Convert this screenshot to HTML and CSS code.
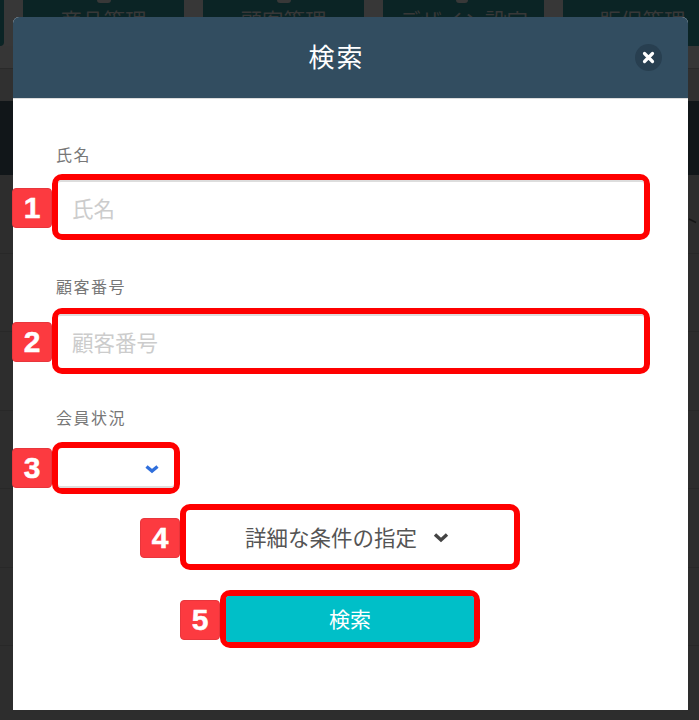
FILE: index.html
```html
<!DOCTYPE html>
<html lang="ja">
<head>
<meta charset="utf-8">
<title>検索</title>
<link rel="stylesheet" href="styles.css">
</head>
<body>
<div class="page">
  <nav class="tiles">
    <div class="tile tile-edge"></div>
    <div class="tile"><i class="stub"></i><span>商品管理</span></div>
    <div class="tile"><i class="stub"></i><span>顧客管理</span></div>
    <div class="tile"><i class="stub stub-slant"></i><span>デザイン設定</span></div>
    <div class="tile tile-last"><span>販促管理</span></div>
  </nav>
  <div class="strip"></div>
  <div class="strip strip-b"></div>
  <div class="band"></div>
  <div class="row"><svg class="mark" width="10" height="6" viewBox="0 0 10 6"><path d="M1 1l7 3.5" stroke="#161616" stroke-width="1.6" fill="none"/></svg></div>
  <div class="row"></div>
  <div class="row"></div>
  <div class="row"></div>
  <div class="row"></div>
  <div class="row"></div>
  <div class="row"></div>
</div>

<div class="modal">
  <header class="modal-head">
    <h1>検索</h1>
    <button class="close" aria-label="閉じる">
      <svg width="13" height="13" viewBox="0 0 13 13"><path d="M2.5 2.5l8 8M10.5 2.5l-8 8" stroke="#fff" stroke-width="3.2" stroke-linecap="round" fill="none"/></svg>
    </button>
  </header>
  <div class="modal-body">
    <label class="label">氏名</label>
    <div class="mark-wrap">
      <b class="badge">1</b>
      <div class="hl hl-input"><div class="input ph-a">氏名</div></div>
    </div>
    <label class="label label-2">顧客番号</label>
    <div class="mark-wrap">
      <b class="badge">2</b>
      <div class="hl hl-input"><div class="input ph-b">顧客番号</div></div>
    </div>
    <label class="label label-3">会員状況</label>
    <div class="mark-wrap mark-select">
      <b class="badge badge-3">3</b>
      <div class="hl hl-select">
        <div class="select">
          <svg width="14" height="10" viewBox="0 0 14 10"><path d="M1.5 2.5l5.5 4.5 5.5-4.5" stroke="#2f6fdc" stroke-width="3.4" fill="none"/></svg>
        </div>
      </div>
    </div>
    <div class="actions">
      <div class="mark-wrap mark-more">
        <b class="badge badge-4">4</b>
        <div class="hl hl-more">
          <div class="more"><span>詳細な条件の指定</span>
            <svg width="16" height="11" viewBox="0 0 16 11"><path d="M2 2.5l6 5.5 6-5.5" stroke="#444" stroke-width="3.4" fill="none"/></svg>
          </div>
        </div>
      </div>
      <div class="mark-wrap mark-submit">
        <b class="badge badge-5">5</b>
        <div class="hl hl-submit"><div class="submit">検索</div></div>
      </div>
    </div>
  </div>
</div>
</body>
</html>
```

FILE: styles.css
```css
* { box-sizing: border-box; }
html, body { margin: 0; height: 720px; overflow: hidden; }
body { background: #2d2d2d; font-family: "Noto Sans CJK JP", "Noto Sans", sans-serif; position: relative; }

.page { height: 720px; overflow: hidden; }
.tiles { display: flex; gap: 19px; height: 46px; background: #373737; overflow: hidden; }
.tile { position: relative; width: 161px; flex: none; background: #0b2425; text-align: center; color: #383838; font-size: 21.5px; line-height: 30px; padding-top: 5px; }
.tile span { display: block; }
.tile-edge { width: 4px; border-radius: 0 0 4px 0; }
.tile-last { width: 136px; }
.tile-last span { width: 161px; transform: translateX(-1px); }
.stub { position: absolute; top: 0; left: 74px; width: 14px; height: 3px; background: #383838; border-radius: 0 0 3px 3px; }
.stub-slant { left: 73px; width: 12px; border-radius: 0 0 6px 6px; }
.strip { height: 22px; background: #363636; }
.strip-b { height: 33px; background: #303030; border-top: 1px solid #2a2a2a; }
.band { height: 74px; background: #111619; }
.row { position: relative; height: 78.5px; background: #2d2d2d; border-bottom: 1px solid #282828; }
.mark { position: absolute; top: 43px; right: 1px; }

.modal { position: absolute; left: 13px; top: 17px; width: 675px; height: 693px; background: #fff; border-radius: 6px 6px 0 0; }
.modal-head { position: relative; height: 82px; padding-right: 28px; background: #324d60; border-bottom: 1px solid #dcdcdc; border-radius: 6px 6px 0 0; display: flex; align-items: center; justify-content: center; }
.modal-head h1 { margin: 0 0 3px; font-size: 26px; font-weight: 400; color: #fff; line-height: 1; letter-spacing: 2px; }
.close { position: absolute; right: 26px; top: 27px; width: 27px; height: 27px; padding: 0; border: 0; border-radius: 50%; background: #283f50; display: flex; align-items: center; justify-content: center; }

.modal-body { padding: 45px 39px 0 39px; }
.label { display: block; margin-left: 4px; font-size: 16px; line-height: 20px; letter-spacing: 1.5px; color: #777; }
.label-2 { margin-top: 36px; height: 22px; }
.label-3 { margin-top: 33px; }
.mark-wrap { position: relative; margin-top: 10px; }
.badge { position: absolute; left: -40px; top: 14px; width: 40px; height: 40px; background: #fc3a40; border: 1px solid #e8363c; border-radius: 4px; color: #fff; font: 700 30px/38px "Liberation Sans", sans-serif; -webkit-text-stroke: 0.5px #fff; text-align: center; }
.hl { border: 6px solid #f00; border-radius: 10px; background: #fff; }
.hl-input { height: 66px; width: 598px; }
.input { height: 54px; border-top: 2px solid #ddd; border-radius: 3px; color: #ccc; font-size: 21.5px; line-height: 51px; padding-left: 14px; }
.mark-select { margin-top: 15px; }
.badge-3 { top: 6px; }
.hl-select { width: 128px; height: 52px; }
.select { height: 40px; border-bottom: 2px solid #ddd; border-radius: 3px; display: flex; align-items: center; justify-content: flex-end; padding-right: 15px; padding-top: 3px; }
.actions { margin-top: 10px; display: flex; flex-direction: column; align-items: flex-start; }
.mark-more { margin: 0 0 0 128px; }
.badge-4 { left: -40px; }
.hl-more { width: 340px; height: 66px; }
.more { height: 54px; display: flex; align-items: center; gap: 16px; padding-left: 59px; padding-bottom: 2px; color: #555; font-size: 21.5px; }
.more svg { flex: none; margin-top: 2px; }
.mark-submit { margin: 20px 0 0 168px; }
.badge-5 { left: -40px; top: 10px; }
.hl-submit { width: 260px; height: 58px; }
.submit { height: 46px; background: #00bfc8; border-radius: 3px; color: #fff; font-size: 21px; line-height: 44px; text-align: center; }
```
